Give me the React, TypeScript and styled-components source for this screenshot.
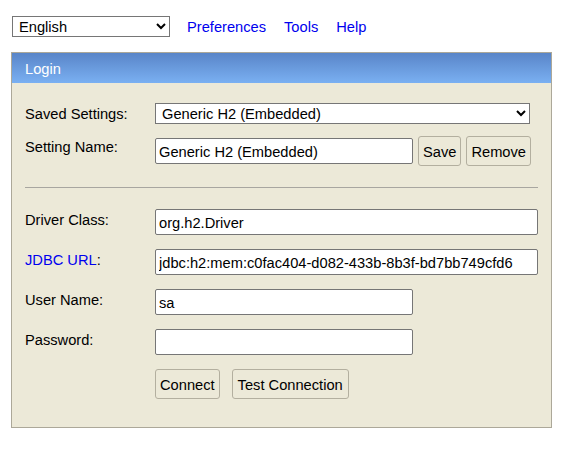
import React from "react";
import styled, { createGlobalStyle } from "styled-components";

const Global = createGlobalStyle`
  html, body { margin: 0; padding: 0; background: #ffffff; }
  body { font-family: "Liberation Sans", Arial, sans-serif; font-size: 14.67px; color: #000; }
`;

const Page = styled.div`
  padding: 16px 0 0 11px;
`;

const TopBar = styled.div`
  display: flex;
  align-items: center;
  gap: 17px;
  padding-left: 1px;
`;

const LangSelect = styled.select`
  width: 158px;
  height: 21px;
  font: inherit;
  font-size: 14.67px;
  color: #000;
  background: #fff;
  border: 1px solid #767676;
  border-radius: 0;
  padding: 1px 0 0 2px;
  margin: 0;
`;

const NavLink = styled.a<{ $first?: boolean }>`
  color: #0000ee;
  text-decoration: none;
  line-height: 17px;
  padding-top: 2px;
  margin-left: ${(p) => (p.$first ? "0" : "1px")};
`;

const Panel = styled.div`
  margin-top: 15px;
  width: 541px;
  box-sizing: border-box;
  border: 1px solid #aca899;
  background: #ece9d8;
`;

const Header = styled.div`
  height: 30px;
  box-sizing: border-box;
  display: flex;
  align-items: center;
  padding: 2px 0 0 13px;
  color: #ffffff;
  background: linear-gradient(to bottom, #5985c8, #7ab0f2);
`;

const Body = styled.div`
  padding: 20px 12px 28px 13px;
`;

const Row = styled.div<{ $mt?: number }>`
  display: flex;
  align-items: flex-start;
  margin-top: ${(p) => p.$mt ?? 0}px;
`;

const Label = styled.div`
  width: 130px;
  flex: none;
  line-height: 17px;
  padding-top: 3px;
`;

const Controls = styled.div`
  display: flex;
  align-items: center;
  gap: 5px;
`;

const FieldSelect = styled.select`
  width: 375px;
  height: 21px;
  font: inherit;
  font-size: 14.67px;
  color: #000;
  background: #fff;
  border: 1px solid #767676;
  border-radius: 0;
  padding: 1px 0 0 2px;
  margin: 0;
`;

const TextInput = styled.input<{ $w: number }>`
  width: ${(p) => p.$w}px;
  height: 26px;
  box-sizing: border-box;
  font: inherit;
  font-size: 14.67px;
  color: #000;
  background: #fff;
  border: 1px solid #767676;
  border-radius: 2px;
  padding: 2px 3px 0;
  margin: 0;
  outline: none;
`;

const Button = styled.button<{ $ml?: number; $px?: number }>`
  height: 30px;
  box-sizing: border-box;
  font: inherit;
  font-size: 14.67px;
  color: #000;
  background: #ece9d8;
  border: 1px solid #b3af9f;
  border-radius: 3px;
  padding: 1px ${(p) => p.$px ?? 4}px 0;
  margin: 0 0 0 ${(p) => p.$ml ?? 0}px;
  cursor: pointer;
`;

const Divider = styled.div`
  height: 1px;
  width: 513px;
  background: #a8a6a0;
  margin: 21px 0 21px 0;
`;

const BlueLink = styled.a`
  color: #0000ee;
  text-decoration: none;
`;

const ButtonRow = styled.div`
  display: flex;
  gap: 12px;
  margin: 14px 0 0 130px;
`;

export default function App() {
  return (
    <>
      <Global />
      <Page>
        <TopBar>
          <LangSelect defaultValue="en">
            <option value="en">English</option>
          </LangSelect>
          <NavLink $first href="#">Preferences</NavLink>
          <NavLink href="#">Tools</NavLink>
          <NavLink href="#">Help</NavLink>
        </TopBar>
        <Panel>
          <Header>Login</Header>
          <Body>
            <Row>
              <Label>Saved Settings:</Label>
              <FieldSelect defaultValue="h2e">
                <option value="h2e">Generic H2 (Embedded)</option>
              </FieldSelect>
            </Row>
            <Row $mt={12}>
              <Label>Setting Name:</Label>
              <Controls>
                <TextInput $w={258} defaultValue="Generic H2 (Embedded)" />
                <Button>Save</Button>
                <Button $ml={0}>Remove</Button>
              </Controls>
            </Row>
            <Divider />
            <Row>
              <Label>Driver Class:</Label>
              <TextInput $w={383} defaultValue="org.h2.Driver" />
            </Row>
            <Row $mt={14}>
              <Label>
                <BlueLink href="#">JDBC URL</BlueLink>:
              </Label>
              <TextInput
                $w={383}
                defaultValue="jdbc:h2:mem:c0fac404-d082-433b-8b3f-bd7bb749cfd6"
              />
            </Row>
            <Row $mt={14}>
              <Label>User Name:</Label>
              <TextInput $w={258} defaultValue="sa" />
            </Row>
            <Row $mt={14}>
              <Label>Password:</Label>
              <TextInput $w={258} type="password" defaultValue="" />
            </Row>
            <ButtonRow>
              <Button>Connect</Button>
              <Button $px={5}>Test Connection</Button>
            </ButtonRow>
          </Body>
        </Panel>
      </Page>
    </>
  );
}
